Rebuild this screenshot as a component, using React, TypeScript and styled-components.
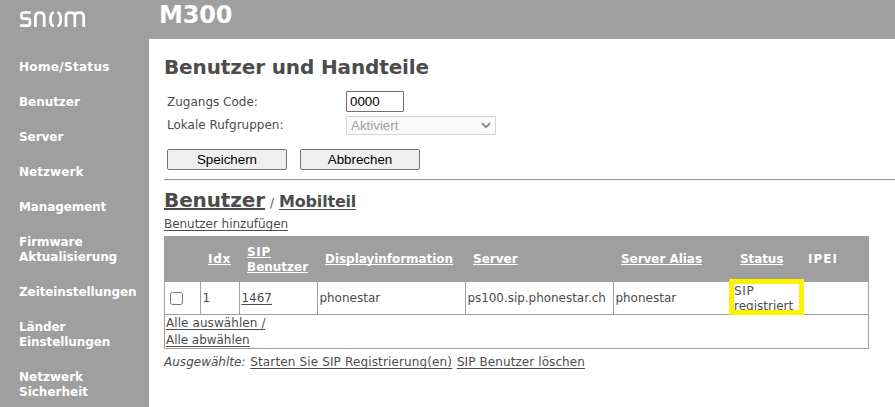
import React from 'react';
import styled, { createGlobalStyle } from 'styled-components';

const GREY = '#9f9f9f';
const INK = '#4c4c4c';

const Global = createGlobalStyle`
  * { box-sizing: border-box; }
  html, body { margin: 0; background: #fff; overflow: hidden; }
  body { font: 12px/15px "DejaVu Sans", Verdana, sans-serif; color: ${INK}; }
`;

const Page = styled.div`
  display: grid;
  grid-template-columns: 149px 1fr;
  grid-template-rows: 39px 368px;
  width: 895px;
  height: 407px;
  overflow: hidden;
`;
const Sidebar = styled.aside`
  grid-row: 1 / 3;
  background: ${GREY};
  color: #fff;
  padding-left: 19px;
`;
const Logo = styled.svg`
  display: block;
  width: 68px;
  height: 20px;
  margin: 9px 0 31px;
`;
const Nav = styled.nav`
  display: flex;
  flex-direction: column;
  gap: 20px;
  font-weight: bold;
`;
const NavItem = styled.div`white-space: nowrap;`;
const Line = styled.div``;
const Topbar = styled.header`
  background: ${GREY};
  padding-left: 10px;
`;
const Product = styled.h1`
  margin: 0;
  color: #fff;
  font-size: 24px;
  line-height: 30px;
`;
const Main = styled.main`padding: 16px 0 0 15px;`;
const Title = styled.h2`
  margin: 0 0 11px;
  font-size: 20px;
  line-height: 24px;
`;
const Field = styled.label<{ $height: number }>`
  display: grid;
  grid-template-columns: 179px auto;
  justify-content: start;
  align-items: center;
  height: ${p => p.$height}px;
  padding-left: 3px;
`;
const Caption = styled.span`padding-top: 1px;`;
const CodeInput = styled.input`
  width: 58px;
  height: 21px;
  padding: 0 3px;
  border: 1px solid #6f6f6f;
  border-radius: 1px;
  color: #000;
  font: 13.33px "Liberation Sans", Arial, sans-serif;
`;
const Select = styled.div`
  display: flex;
  align-items: center;
  justify-content: space-between;
  width: 150px;
  height: 19px;
  padding: 0 4px;
  border: 1px solid #d5d5d5;
  background: #fafafa;
  color: #a0a0a0;
  font: 13.33px "Liberation Sans", Arial, sans-serif;
`;
const Buttons = styled.div`
  display: flex;
  gap: 13px;
  padding: 12px 0 9px 3px;
`;
const Button = styled.button`
  width: 120px;
  height: 21px;
  padding: 0;
  border: 1px solid #767676;
  border-radius: 2px;
  background: #efefef;
  color: #000;
  font: 13.33px "Liberation Sans", Arial, sans-serif;
`;
const Rule = styled.hr`
  margin: 0;
  height: 2px;
  border: 0;
  border-top: 1px solid #9a9a9a;
  border-bottom: 1px solid #eee;
`;
const Sections = styled.div`
  display: flex;
  align-items: baseline;
  height: 24px;
  margin-top: 7px;
  line-height: 24px;
  white-space: pre;
`;
const Slash = styled.span`padding: 0 5px;`;
const Link = styled.a<{ $size?: number; $bold?: boolean; $track?: number }>`
  font-size: ${p => p.$size ?? 12}px;
  font-weight: ${p => (p.$bold ? 'bold' : 'normal')};
  letter-spacing: ${p => p.$track ?? 0}px;
  text-decoration: underline;
  text-decoration-skip-ink: none;
  text-underline-offset: ${p => (p.$size === 20 ? 1 : 2)}px;
  text-decoration-thickness: ${p => (p.$size === 20 ? 2 : 1)}px;
`;
const AddLine = styled.div`
  height: 20px;
  padding-top: 5px;
  margin-bottom: 4px;
  line-height: 15px;
`;
const Table = styled.div`
  width: 705px;
  border: 1px solid ${GREY};
  border-top: 0;
`;
const Row = styled.div`
  display: grid;
  grid-template-columns: 36px 39px 78px 148px 148px 118px 69px 1fr;
`;
const HeadRow = styled(Row)`
  height: 46px;
  margin: 0 -1px;
  padding: 0 1px;
  background: ${GREY};
  color: #fff;
  font-weight: bold;
  align-items: center;
`;
const Th = styled.div<{ $track?: number; $plain?: boolean }>`
  padding: 1px 0 0 7px;
  letter-spacing: ${p => p.$track ?? 0}px;
  text-decoration: ${p => (p.$plain ? 'none' : 'underline')};
  text-decoration-skip-ink: none;
  text-underline-offset: 1px;
  text-decoration-thickness: 1px;
`;
const StatusTh = styled(Th)`padding-left: 8px;`;
const BodyRow = styled(Row)`height: 32px;`;
const Td = styled.div`
  display: flex;
  align-items: center;
  padding: 0 0 0 1.4px;
  border-right: 1px solid ${GREY};
  white-space: nowrap;
  &:last-child { border-right: 0; }
`;
const Check = styled.span`
  width: 13px;
  height: 13px;
  margin-left: 3.6px;
  border: 1px solid #767676;
  border-radius: 2.5px;
  background: #fff;
`;
const StatusCell = styled(Td)`
  position: relative;
  display: block;
  padding-top: 2px;
  padding-left: 2px;
`;
const Marker = styled.span`
  position: absolute;
  left: -3px;
  top: -3px;
  width: 75px;
  height: 36px;
  border: 5px solid #fff200;
`;
const Tracked = styled.span<{ $track: number }>`letter-spacing: ${p => p.$track}px;`;
const SelectRow = styled.div`
  height: 34px;
  border-top: 1px solid ${GREY};
  padding-left: 1px;
  line-height: 17px;
`;
const Actions = styled.div`
  display: flex;
  gap: 4.7px;
  margin-top: 6px;
  white-space: nowrap;
`;
const Selected = styled.em`letter-spacing: 0.02px;`;

const nav: { lines: string[]; track: number }[] = [
  { lines: ['Home/Status'], track: 0.32 },
  { lines: ['Benutzer'], track: -0.05 },
  { lines: ['Server'], track: -0.05 },
  { lines: ['Netzwerk'], track: 0.05 },
  { lines: ['Management'], track: -0.12 },
  { lines: ['Firmware', 'Aktualisierung'], track: -0.05 },
  { lines: ['Zeiteinstellungen'], track: -0.1 },
  { lines: ['Länder', 'Einstellungen'], track: -0.1 },
  { lines: ['Netzwerk', 'Sicherheit'], track: 0 },
];

export default function App() {
  return (
    <>
      <Global />
      <Page>
        <Sidebar>
          <Logo viewBox="0 0 68 20" fill="none" stroke="#fff" strokeWidth="2.7" aria-label="snom">
            <path d="M11.8 3.5H4.8Q2.4 3.5 2.4 5.7V7.3Q2.4 9.7 4.8 9.7H8.6Q10.9 9.7 10.9 11.9V14.4Q10.9 16.6 8.6 16.6H1.2" />
            <path d="M16.4 17.9V8Q16.4 3.6 20.8 3.6T25.2 8V17.9" />
            <path d="M35 3.3Q31.4 4.2 31.4 10.3T35 17M38.2 3.3Q41.8 4.2 41.8 10.3T38.2 17" />
            <path d="M47 17.9V7.8Q47 3.6 50.6 3.6H52Q55.8 3.6 55.8 7.8V17.9M55.8 7.8Q55.8 3.6 59.6 3.6H61Q64.7 3.6 64.7 7.8V17.9" />
          </Logo>
          <Nav>
            {nav.map((item, i) => (
              <NavItem key={i}>
                {item.lines.map(l => (
                  <Line key={l}><Tracked $track={item.track}>{l}</Tracked></Line>
                ))}
              </NavItem>
            ))}
          </Nav>
        </Sidebar>
        <Topbar><Product><Tracked $track={-0.2}>M300</Tracked></Product></Topbar>
        <Main>
          <Title><Tracked $track={-0.13}>Benutzer und Handteile</Tracked></Title>
          <Field $height={23}><Caption>Zugangs Code:</Caption><CodeInput defaultValue="0000" /></Field>
          <Field $height={24}>
            <Caption>Lokale Rufgruppen:</Caption>
            <Select>
              Aktiviert
              <svg width="10" height="7" viewBox="0 0 10 7" fill="none" stroke="#8c8c8c" strokeWidth="2">
                <path d="M1 1.2L5 5.2L9 1.2" />
              </svg>
            </Select>
          </Field>
          <Buttons><Button>Speichern</Button><Button>Abbrechen</Button></Buttons>
          <Rule />
          <Sections>
            <Link $size={20} $bold $track={-0.11}>Benutzer</Link>
            <Slash>/</Slash>
            <Link $size={16} $bold $track={-0.2}>Mobilteil</Link>
          </Sections>
          <AddLine><Link $track={-0.04}>Benutzer hinzufügen</Link></AddLine>
          <Table>
            <HeadRow>
              <Th $plain />
              <Th $track={0.74}>Idx</Th>
              <Th><Tracked $track={0.7}>SIP</Tracked><br />Benutzer</Th>
              <Th $track={-0.04}>Displayinformation</Th>
              <Th>Server</Th>
              <Th $track={-0.04}>Server Alias</Th>
              <StatusTh $track={-0.1}>Status</StatusTh>
              <Th $plain $track={1.02}>IPEI</Th>
            </HeadRow>
            <BodyRow>
              <Td><Check /></Td>
              <Td>1</Td>
              <Td><Link>1467</Link></Td>
              <Td>phonestar</Td>
              <Td><Tracked $track={-0.04}>ps100.sip.phonestar.ch</Tracked></Td>
              <Td>phonestar</Td>
              <StatusCell><Tracked $track={0.7}>SIP</Tracked><br />registriert<Marker /></StatusCell>
              <Td />
            </BodyRow>
            <SelectRow>
              <Link $track={0.08}>Alle auswählen /</Link><br />
              <Link $track={-0.04}>Alle abwählen</Link>
            </SelectRow>
          </Table>
          <Actions>
            <Selected>Ausgewählte:</Selected>
            <Link $track={0.14}>Starten Sie SIP Registrierung(en)</Link>
            <Link $track={0.09}>SIP Benutzer löschen</Link>
          </Actions>
        </Main>
      </Page>
    </>
  );
}
